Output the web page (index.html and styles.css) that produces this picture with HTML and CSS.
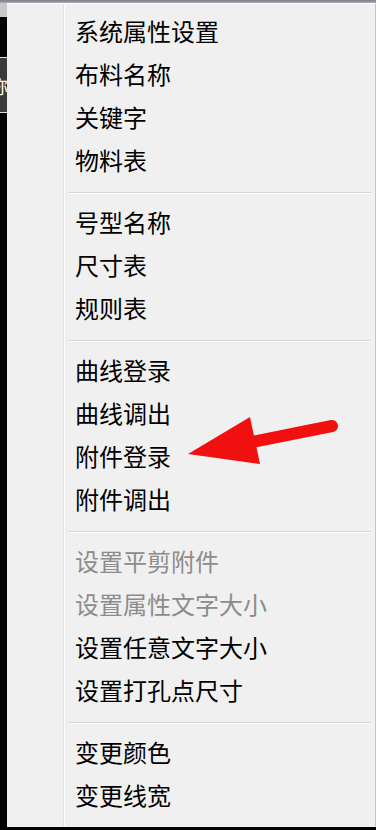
FILE: index.html
```html
<!DOCTYPE html>
<html>

<head>
  <title>右键菜单</title>
  <meta charset="UTF-8">
  <link rel="stylesheet" href="styles.css">
</head>

<body>
  <div class="topbar"></div>
  <div class="screen">
    <div class="side">
      <div class="side-top"></div>
      <div class="side-tab">称</div>
    </div>
    <div class="menu">
      <div class="item">系统属性设置</div>
      <div class="item">布料名称</div>
      <div class="item">关键字</div>
      <div class="item">物料表</div>
      <div class="sep"></div>
      <div class="item">号型名称</div>
      <div class="item">尺寸表</div>
      <div class="item">规则表</div>
      <div class="sep"></div>
      <div class="item">曲线登录</div>
      <div class="item">曲线调出</div>
      <div class="item">附件登录</div>
      <div class="item">附件调出</div>
      <div class="sep"></div>
      <div class="item disabled">设置平剪附件</div>
      <div class="item disabled">设置属性文字大小</div>
      <div class="item">设置任意文字大小</div>
      <div class="item">设置打孔点尺寸</div>
      <div class="sep"></div>
      <div class="item">变更颜色</div>
      <div class="item">变更线宽</div>

      <!-- 标注箭头 -->
      <svg class="arrow" width="160" height="60" viewBox="0 0 160 60">
        <path d="M56 33 L146 15" stroke="#f01010" stroke-width="12" stroke-linecap="round" fill="none" />
        <path d="M2 43 L64 6 L74 53 Z" fill="#f01010" />
      </svg>
    </div>
  </div>
</body>

</html>
```

FILE: styles.css
```css
* {
  padding: 0;
  margin: 0;
  box-sizing: border-box;
}

body {
  background-color: #000;
  width: 376px;
  height: 830px;
  overflow: hidden;
  font-family: "Noto Sans CJK SC", "Microsoft YaHei", sans-serif;
}

.topbar {
  height: 3px;
  background: linear-gradient(#7d7d88, #a9a9b4);
}

.screen {
  display: flex;
  height: 824px;
}

.side {
  width: 7px;
  background-color: #000;
  display: flex;
  flex-direction: column;
}

.side-top {
  height: 14px;
  background-color: #c8c8c8;
}

.side-tab {
  margin-top: 40px;
  height: 56px;
  background-color: #3a3a3a;
  border-top: 1px solid #ddd;
  border-bottom: 1px solid #ddd;
  color: #fff;
  font-size: 18px;
  line-height: 56px;
  text-indent: -10px;
  overflow: hidden;
}

.menu {
  flex: 1;
  position: relative;
  padding: 5px 4px 7px 0;
  border-top: 1px solid #fff;
  border-right: 1px solid #c4c4c4;
  background: linear-gradient(to right,
      #f0f0f0 56px, #e0e0e0 56px, #e0e0e0 57px,
      #fbfbfb 57px, #fbfbfb 58px, #f0f0f0 58px);
}

.item {
  height: 43px;
  line-height: 43px;
  padding-left: 68px;
  font-size: 24px;
  color: #000;
  white-space: nowrap;
}

.item.disabled {
  color: #8c8c8c;
}

.sep {
  height: 19px;
  margin: 0 0 0 61px;
  padding-top: 11px;
}

.sep:nth-of-type(1) {
  height: 20px;
}

.sep::after {
  content: "";
  display: block;
  height: 1px;
  background-color: #d6d6d6;
  border-bottom: 1px solid #fdfdfd;
}

.arrow {
  position: absolute;
  left: 179px;
  top: 407px;
}
```
